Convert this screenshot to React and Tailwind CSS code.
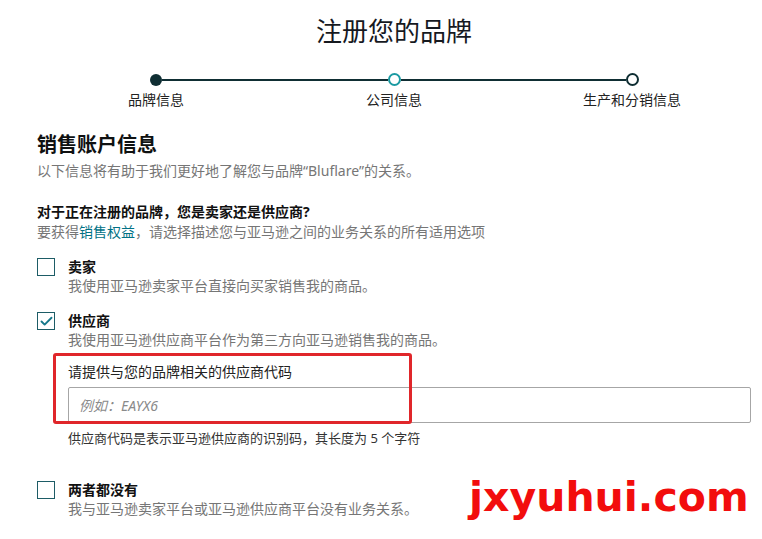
import { Check } from 'lucide-react'

const cjk = { fontFamily: '"Noto Sans", "Noto Sans CJK SC", sans-serif' }

const Box = ({ checked }) => (
  <div className="w-[18px] h-[18px] border-[1.5px] border-[#1d5c66] bg-white flex items-center justify-center shrink-0">
    {checked && <Check size={15} strokeWidth={3} className="text-[#15778a]" />}
  </div>
)

const Option = ({ checked, title, desc, children }) => (
  <div className="flex gap-[13px]">
    <div className="pt-[1px]">
      <Box checked={checked} />
    </div>
    <div className="flex-1">
      <p className="text-[14px] leading-[19px] font-bold text-[#111]">{title}</p>
      <p className="text-[14px] leading-[19px] text-[#767676]">{desc}</p>
      {children}
    </div>
  </div>
)

export default function App() {
  return (
    <div className="relative w-[762px] h-[539px] bg-white overflow-hidden" style={cjk}>
      {/* Title */}
      <h1 className="pt-[13px] text-center text-[26px] leading-[36px] font-normal text-[#16191f] pl-[26px]">
        注册您的品牌
      </h1>

      {/* Stepper */}
      <div className="mt-[24px] flex items-center pl-[150px] w-[639px]">
        <span className="w-[12px] h-[12px] rounded-full bg-[#0f2e33]" />
        <span className="flex-1 h-[2px] bg-[#0f2e33]" />
        <span className="w-[13px] h-[13px] rounded-full border-2 border-[#1b9aa2] bg-white" />
        <span className="flex-1 h-[2px] bg-[#0f2e33]" />
        <span className="w-[13px] h-[13px] rounded-full border-2 border-[#0f2e33] bg-white" />
      </div>
      <div className="mt-[4px] flex pl-[96px] gap-[118px] text-[14px] leading-[19px] text-[#222]">
        <span className="w-[120px] text-center">品牌信息</span>
        <span className="w-[120px] text-center">公司信息</span>
        <span className="w-[120px] text-center">生产和分销信息</span>
      </div>

      <div className="pl-[37px] pr-[11px]">
        {/* Section heading */}
        <h2 className="mt-[22px] text-[20px] leading-[28px] font-bold text-[#0f1111]">销售账户信息</h2>
        <p className="mt-[2px] text-[14px] leading-[19px] text-[#767676]">
          以下信息将有助于我们更好地了解您与品牌“Bluflare”的关系。
        </p>

        <p className="mt-[22px] text-[14px] leading-[19px] font-bold text-[#111]">
          对于正在注册的品牌，您是卖家还是供应商?
        </p>
        <p className="mt-[1px] text-[14px] leading-[19px] text-[#767676]">
          要获得<span className="text-[#007185]">销售权益</span>，请选择描述您与亚马逊之间的业务关系的所有适用选项
        </p>

        <div className="mt-[16px] flex flex-col gap-[16px]">
          <Option checked={false} title="卖家" desc="我使用亚马逊卖家平台直接向买家销售我的商品。" />
          <Option checked title="供应商" desc="我使用亚马逊供应商平台作为第三方向亚马逊销售我的商品。">
            <div className="relative mt-[13px]">
              <p className="text-[14px] leading-[19px] text-[#222]">请提供与您的品牌相关的供应商代码</p>
              <div className="mt-[6px] h-[36px] border border-[#a6a6a6] rounded-[2px] flex items-center px-[10px]">
                <span className="text-[14px] italic text-[#8a8a8a]">例如：EAYX6</span>
              </div>
              <p className="mt-[6px] text-[13px] leading-[19px] text-[#333]">
                供应商代码是表示亚马逊供应商的识别码，其长度为 5 个字符
              </p>
              {/* highlight frame */}
              <div className="absolute left-[-15px] top-[-9px] w-[359px] h-[71px] border-[3px] border-[#e0262a] rounded-[3px] pointer-events-none" />
            </div>
          </Option>
          <div className="mt-[16px]">
            <Option checked={false} title="两者都没有" desc="我与亚马逊卖家平台或亚马逊供应商平台没有业务关系。" />
          </div>
        </div>
      </div>

      {/* watermark */}
      <div
        className="absolute left-[469px] top-[472px] text-[41px] leading-[50px] font-bold text-[#f20d0d]"
        style={{ fontFamily: '"DejaVu Sans", sans-serif' }}
      >
        jxyuhui.com
      </div>
    </div>
  )
}
